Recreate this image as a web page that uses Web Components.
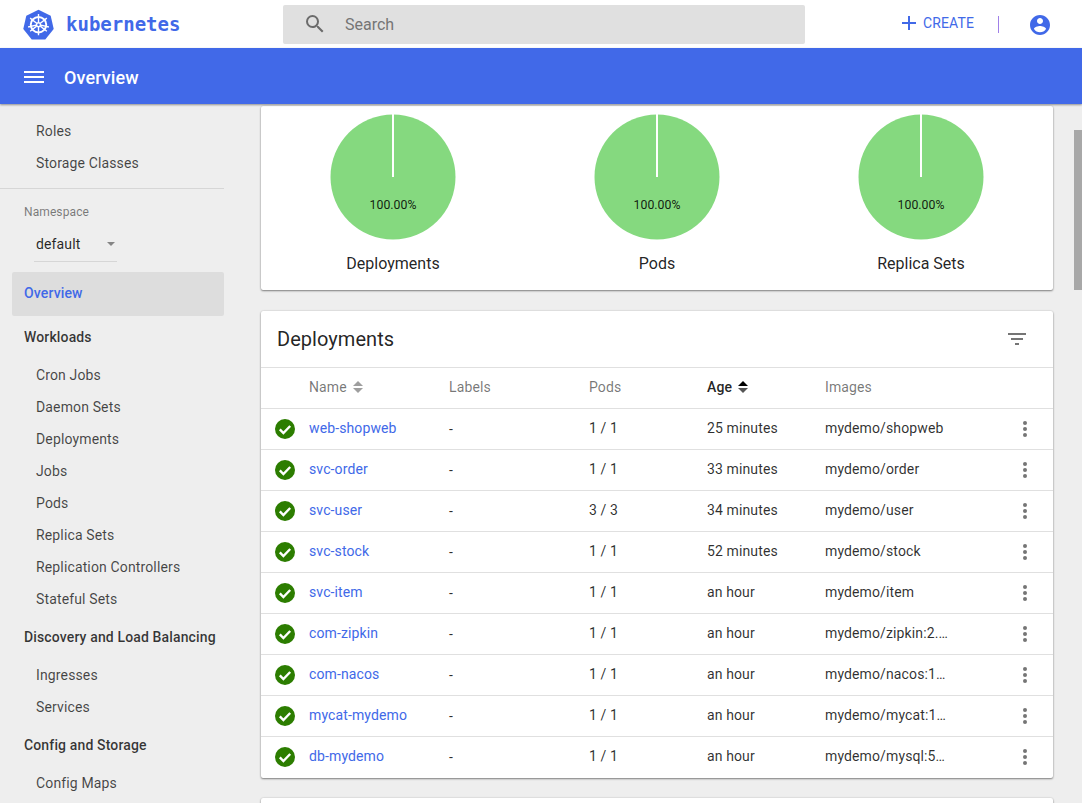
<!DOCTYPE html>
<html>
<head>
<meta charset="utf-8">
<title>Kubernetes Dashboard</title>
<style>
  html, body { margin: 0; height: 100%; overflow: hidden; }
  body { font-family: Roboto, "Liberation Sans", sans-serif; background: #eeeeee; color: rgba(0,0,0,.87); }
</style>
</head>
<body>
<kd-app></kd-app>

<script>
const BLUE = '#4169e8';

function define(name, styles, render) {
    customElements.define(name, class extends HTMLElement {
        connectedCallback() {
            if (this.shadowRoot) return;
            this.attachShadow({ mode: 'open' });
            this.shadowRoot.innerHTML = `<style>${styles}</style>` + render(this);
        }
    });
}

define('kd-logo', `
  :host { display: flex; align-items: center; gap: 12px; width: 260px; }
  svg { display: block; width: 31px; height: 31px; }
  span { font: 700 19px "DejaVu Sans Mono", monospace; color: ${BLUE}; }
`, () => `
  <svg viewBox="0 0 32 32">
    <path d="M16 .8 28.6 6.9 31.7 20.6 23 31.5H9L.3 20.6 3.4 6.9Z" fill="${BLUE}"/>
    <g fill="none" stroke="#fff">
      <circle cx="16" cy="16.2" r="8" stroke-width="2"/>
      <circle cx="16" cy="16.2" r="2" stroke-width="1.4"/>
      <path stroke-width="1.4" d="M16 5.2v8.6M16 18.6v8.6M7.4 9.4l6.7 5.3M17.9 17.7l6.7 5.3M24.6 9.4l-6.7 5.3M14.1 17.7l-6.7 5.3M5.3 18.6l8.3-1.9M18.4 16.7l8.3 1.9"/>
    </g>
  </svg>
  <span>kubernetes</span>
`);

define('kd-search', `
  :host { display: flex; align-items: center; width: 522px; height: 39px; background: #e0e0e0; border-radius: 2px; }
  svg { width: 24px; height: 24px; margin: 0 18px 0 20px; fill: #6b6b6b; }
  span { font-size: 16px; color: #757575; }
`, () => `
  <svg viewBox="0 0 24 24"><path d="M15.5 14h-.79l-.28-.27A6.47 6.47 0 0 0 16 9.5 6.5 6.5 0 1 0 9.5 16c1.61 0 3.09-.59 4.23-1.57l.27.28v.79l5 4.99L20.49 19l-4.99-5zm-6 0C7.01 14 5 11.99 5 9.5S7.01 5 9.5 5 14 7.01 14 9.5 11.99 14 9.5 14z"/></svg>
  <span>Search</span>
`);

define('kd-toolbar', `
  :host { display: flex; align-items: center; height: 48px; padding-left: 23px; background: #fff; position: relative; }
  .right { display: flex; align-items: center; margin-left: auto; color: ${BLUE}; }
  .plus { width: 24px; height: 24px; fill: ${BLUE}; margin: -2px 2px 0 0; }
  .create { font-size: 14px; letter-spacing: .12px; margin: -2px 24px 0 0; }
  .sep { width: 1px; height: 17px; background: #a080e8; margin: 0 29px 0 0; }
  .acct { width: 24px; height: 24px; fill: ${BLUE}; margin: 2px 30px 0 0; }
`, () => `
  <kd-logo></kd-logo>
  <kd-search></kd-search>
  <div class="right">
    <svg class="plus" viewBox="0 0 24 24"><path d="M19 13h-6v6h-2v-6H5v-2h6V5h2v6h6v2z"/></svg>
    <span class="create">CREATE</span>
    <span class="sep"></span>
    <svg class="acct" viewBox="0 0 24 24"><path d="M12 2C6.48 2 2 6.48 2 12s4.48 10 10 10 10-4.48 10-10S17.52 2 12 2zm0 3c1.66 0 3 1.34 3 3s-1.34 3-3 3-3-1.34-3-3 1.34-3 3-3zm0 14.2a7.2 7.2 0 0 1-6-3.22c.03-1.99 4-3.08 6-3.08 1.99 0 5.97 1.09 6 3.08a7.2 7.2 0 0 1-6 3.22z"/></svg>
  </div>
`);

define('kd-titlebar', `
  :host { display: flex; align-items: center; box-sizing: border-box; height: 56px; padding: 2px 0 0 22px; background: ${BLUE}; color: #fff; box-shadow: 0 1px 2px rgba(0,0,0,.4); position: relative; z-index: 2; }
  svg { width: 24px; height: 24px; fill: #fff; margin-right: 18px; }
  span { font-size: 18px; font-weight: 500; letter-spacing: .1px; }
`, () => `
  <svg viewBox="0 0 24 24"><path d="M2 18h20v-2H2zm0-5h20v-2H2zm0-7v2h20V6z"/></svg>
  <span><slot></slot></span>
`);

define('kd-nav-item', `
  :host { display: flex; align-items: center; height: 32px; padding-left: 36px; font-size: 14px; letter-spacing: .14px; color: rgba(0,0,0,.72); }
`, () => `<slot></slot>`);

define('kd-nav-head', `
  :host { display: flex; align-items: center; height: 44px; padding-left: 24px; font-size: 14px; font-weight: 500; letter-spacing: .14px; color: rgba(0,0,0,.78); }
`, () => `<slot></slot>`);

define('kd-namespace', `
  :host { display: block; height: 83px; border-top: 1px solid #d6d6d6; margin-top: 9px; position: relative; }
  .label { font-size: 12px; letter-spacing: .1px; color: rgba(0,0,0,.5); padding: 16px 0 0 24px; line-height: 14px; }
  .select { display: flex; align-items: center; justify-content: space-between; box-sizing: border-box; width: 83px; height: 36px; margin: 7px 0 0 34px; padding: 0 2px; border-bottom: 1px solid #d6d6d6; font-size: 14px; letter-spacing: .14px; color: rgba(0,0,0,.85); }
  i { border: 4.5px solid transparent; border-top-color: #858585; border-bottom: 0; }
`, () => `
  <div class="label">Namespace</div>
  <div class="select"><span>default</span><i></i></div>
`);

define('kd-sidebar', `
  :host { display: block; width: 224px; flex: none; overflow: hidden; padding-top: 11px; box-sizing: border-box; }
  .active { display: flex; align-items: center; box-sizing: border-box; height: 44px; margin: 0 0 -1px 12px; padding: 0 0 2px 12px; background: #dddddd; border-radius: 2px; color: ${BLUE}; font-size: 14px; font-weight: 500; letter-spacing: .14px; }
`, () => `
  <kd-nav-item>Roles</kd-nav-item>
  <kd-nav-item>Storage Classes</kd-nav-item>
  <kd-namespace></kd-namespace>
  <div class="active">Overview</div>
  <kd-nav-head>Workloads</kd-nav-head>
  <kd-nav-item>Cron Jobs</kd-nav-item>
  <kd-nav-item>Daemon Sets</kd-nav-item>
  <kd-nav-item>Deployments</kd-nav-item>
  <kd-nav-item>Jobs</kd-nav-item>
  <kd-nav-item>Pods</kd-nav-item>
  <kd-nav-item>Replica Sets</kd-nav-item>
  <kd-nav-item>Replication Controllers</kd-nav-item>
  <kd-nav-item>Stateful Sets</kd-nav-item>
  <kd-nav-head>Discovery and Load Balancing</kd-nav-head>
  <kd-nav-item>Ingresses</kd-nav-item>
  <kd-nav-item>Services</kd-nav-item>
  <kd-nav-head>Config and Storage</kd-nav-head>
  <kd-nav-item>Config Maps</kd-nav-item>
`);

define('kd-pie', `
  :host { display: flex; flex-direction: column; align-items: center; width: 264px; }
  svg { width: 126px; height: 126px; display: block; }
  text { font: 12.3px Roboto, "Liberation Sans", sans-serif; fill: rgba(0,0,0,.87); text-anchor: middle; }
  span { margin-top: 14px; font-size: 16px; line-height: 20px; color: rgba(0,0,0,.87); }
`, el => `
  <svg viewBox="0 0 126 126">
    <circle cx="63" cy="63" r="62.5" fill="#85d97f"/>
    <rect x="62" y="0" width="2" height="63" fill="#fff"/>
    <text x="63" y="95">100.00%</text>
  </svg>
  <span>${el.getAttribute('label')}</span>
`);

define('kd-card', `
  :host { display: block; background: #fff; box-shadow: 0 1px 2px rgba(0,0,0,.45), 0 0 2px rgba(0,0,0,.15); border-radius: 2px; }
`, () => `<slot></slot>`);

define('kd-status', `
  :host { display: block; width: 20px; height: 20px; }
  svg { display: block; width: 20px; height: 20px; }
`, () => `
  <svg viewBox="0 0 20 20">
    <circle cx="10" cy="10" r="10" fill="#2c7d00"/>
    <path d="M4.8 10.4l3.6 3.6 6.8-7" fill="none" stroke="#fff" stroke-width="2.4"/>
  </svg>
`);

const COLS = '48px 140px 140px 118px 118px 1fr 30px';

define('kd-row', `
  :host { display: grid; grid-template-columns: ${COLS}; align-items: center; height: 40px; border-top: 1px solid #e0e0e0; font-size: 14px; letter-spacing: .12px; color: rgba(0,0,0,.82); }
  .st { padding-left: 14px; }
  .t { padding-bottom: 2px; }
  .name { color: ${BLUE}; }
  .menu { width: 4px; }
  .menu svg { display: block; width: 4px; height: 16px; fill: #757575; }
`, el => `
  <div class="st"><kd-status></kd-status></div>
  <div class="t name">${el.getAttribute('name')}</div>
  <div>-</div>
  <div class="t">${el.getAttribute('pods')}</div>
  <div class="t">${el.getAttribute('age')}</div>
  <div class="t">${el.getAttribute('image')}</div>
  <div class="menu"><svg viewBox="0 0 4 16"><circle cx="2" cy="2" r="2"/><circle cx="2" cy="8" r="2"/><circle cx="2" cy="14" r="2"/></svg></div>
`);

define('kd-sort', `
  :host { display: inline-flex; flex-direction: column; gap: 2px; margin-left: 6px; }
  i { display: block; border: 5px solid transparent; }
  .up { border-top: 0; border-bottom-color: var(--up, #9e9e9e); }
  .down { border-bottom: 0; border-top-color: var(--down, #9e9e9e); }
`, () => `<i class="up"></i><i class="down"></i>`);

define('kd-deployments', `
  :host { display: block; padding-bottom: 1px; }
  .title { display: flex; align-items: center; justify-content: space-between; height: 56px; padding: 0 24px 0 16px; font-size: 20px; letter-spacing: .05px; color: rgba(0,0,0,.87); }
  .title svg { width: 24px; height: 24px; fill: #757575; }
  .head { display: grid; grid-template-columns: ${COLS}; align-items: center; height: 38px; padding-bottom: 2px; border-top: 1px solid #e0e0e0; font-size: 14px; letter-spacing: .12px; color: rgba(0,0,0,.54); }
  .head div { display: flex; align-items: center; }
  .age { color: rgba(0,0,0,.87); font-weight: 500; --up: #000; --down: #555; }
`, () => `
  <div class="title"><span>Deployments</span>
    <svg viewBox="0 0 24 24"><path d="M10 18h4v-2h-4v2zM3 6v2h18V6H3zm3 7h12v-2H6v2z"/></svg></div>
  <div class="head">
    <div></div>
    <div>Name <kd-sort></kd-sort></div>
    <div>Labels</div>
    <div>Pods</div>
    <div class="age">Age <kd-sort></kd-sort></div>
    <div>Images</div>
    <div></div>
  </div>
  <kd-row name="web-shopweb" pods="1 / 1" age="25 minutes" image="mydemo/shopweb"></kd-row>
  <kd-row name="svc-order" pods="1 / 1" age="33 minutes" image="mydemo/order"></kd-row>
  <kd-row name="svc-user" pods="3 / 3" age="34 minutes" image="mydemo/user"></kd-row>
  <kd-row name="svc-stock" pods="1 / 1" age="52 minutes" image="mydemo/stock"></kd-row>
  <kd-row name="svc-item" pods="1 / 1" age="an hour" image="mydemo/item"></kd-row>
  <kd-row name="com-zipkin" pods="1 / 1" age="an hour" image="mydemo/zipkin:2.…"></kd-row>
  <kd-row name="com-nacos" pods="1 / 1" age="an hour" image="mydemo/nacos:1…"></kd-row>
  <kd-row name="mycat-mydemo" pods="1 / 1" age="an hour" image="mydemo/mycat:1…"></kd-row>
  <kd-row name="db-mydemo" pods="1 / 1" age="an hour" image="mydemo/mysql:5…"></kd-row>
`);

define('kd-app', `
  :host { display: flex; flex-direction: column; height: 803px; overflow: hidden; position: relative; }
  .main { display: flex; flex: 1; min-height: 0; }
  .content { flex: 1; min-width: 0; display: flex; flex-direction: column; gap: 20px; padding: 2px 29px 0 37px; overflow: hidden; }
  .pies { display: flex; justify-content: space-around; flex: none; height: 184px; padding-top: 8px; box-sizing: border-box; }
  .pies-card { flex: none; height: 184px; margin-bottom: 1px; }
  .deploy-card { flex: none; }
  .stub { flex: none; height: 60px; }
  .track { position: absolute; right: 0; top: 130px; width: 8px; height: 160px; background: #a8a8a8; }
`, () => `
  <kd-toolbar></kd-toolbar>
  <kd-titlebar>Overview</kd-titlebar>
  <div class="main">
    <kd-sidebar></kd-sidebar>
    <div class="content">
      <kd-card class="pies-card"><div class="pies">
        <kd-pie label="Deployments"></kd-pie>
        <kd-pie label="Pods"></kd-pie>
        <kd-pie label="Replica Sets"></kd-pie>
      </div></kd-card>
      <kd-card class="deploy-card"><kd-deployments></kd-deployments></kd-card>
      <kd-card class="stub"></kd-card>
    </div>
  </div>
  <div class="track"></div>
`);
</script>
</body>
</html>
